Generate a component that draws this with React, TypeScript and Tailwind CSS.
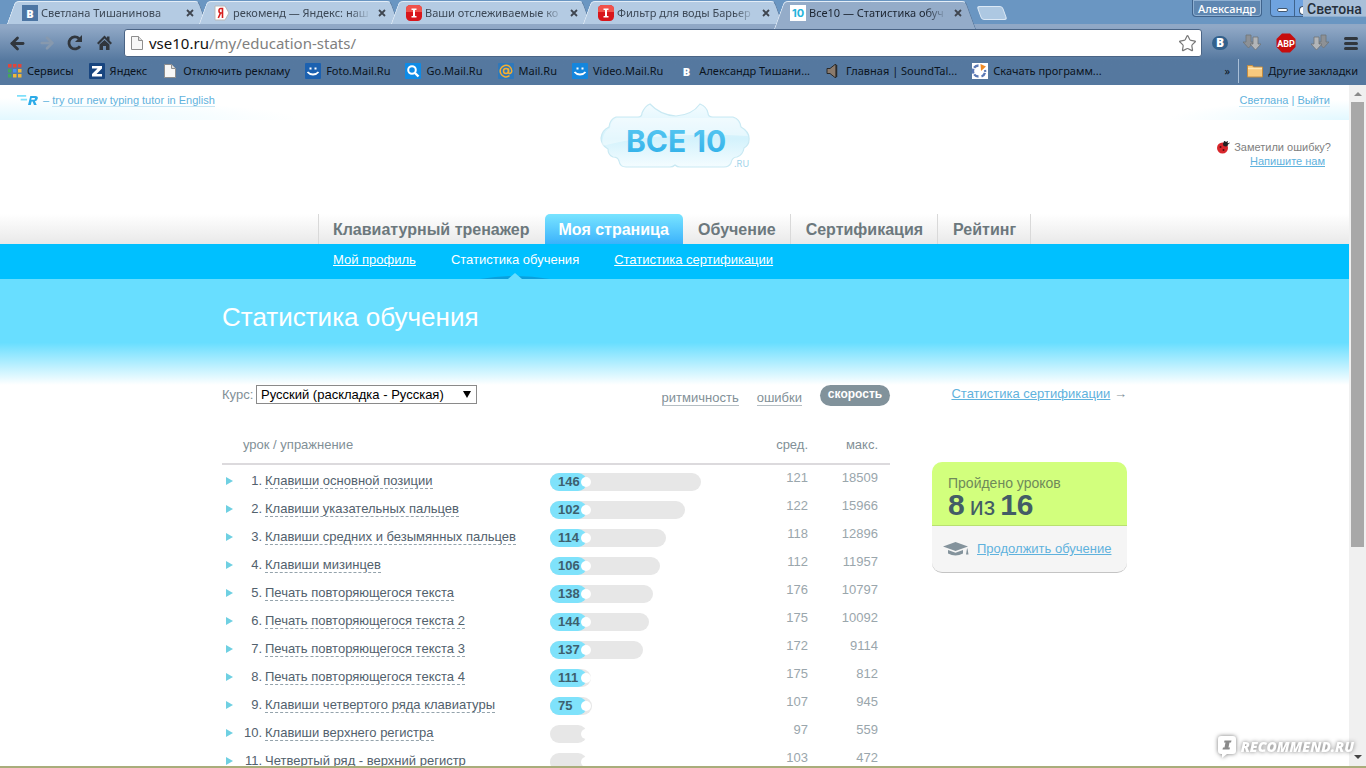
import React, { useState } from 'react';
import { ArrowLeft, ArrowRight, Star } from 'lucide-react';

interface Lesson {
  id: number;
  name: string;
  speed: number | null;
  bar: number;
  avg: number;
  max: number;
}

// bar: ширина серой полосы в пикселях
const lessons: Lesson[] = [
  { id: 1, name: 'Клавиши основной позиции', speed: 146, bar: 151, avg: 121, max: 18509 },
  { id: 2, name: 'Клавиши указательных пальцев', speed: 102, bar: 135, avg: 122, max: 15966 },
  { id: 3, name: 'Клавиши средних и безымянных пальцев', speed: 114, bar: 116, avg: 118, max: 12896 },
  { id: 4, name: 'Клавиши мизинцев', speed: 106, bar: 110, avg: 112, max: 11957 },
  { id: 5, name: 'Печать повторяющегося текста', speed: 138, bar: 103, avg: 176, max: 10797 },
  { id: 6, name: 'Печать повторяющегося текста 2', speed: 144, bar: 99, avg: 175, max: 10092 },
  { id: 7, name: 'Печать повторяющегося текста 3', speed: 137, bar: 93, avg: 172, max: 9114 },
  { id: 8, name: 'Печать повторяющегося текста 4', speed: 111, bar: 41, avg: 175, max: 812 },
  { id: 9, name: 'Клавиши четвертого ряда клавиатуры', speed: 75, bar: 42, avg: 107, max: 945 },
  { id: 10, name: 'Клавиши верхнего регистра', speed: null, bar: 37, avg: 97, max: 559 },
  { id: 11, name: 'Четвертый ряд - верхний регистр', speed: null, bar: 37, avg: 103, max: 472 },
];

const VkIcon = ({ plain = false }: { plain?: boolean }) => (
  <span className={`flex h-4 w-4 shrink-0 items-center justify-center text-[11px] font-black leading-none text-white ${plain ? '' : 'bg-[#4c75a3]'}`}>B</span>
);

const YandexIcon = () => (
  <svg viewBox="0 0 16 16" className="h-4 w-4 shrink-0">
    <path d="M1 1h10l4 7-4 7H1z" fill="#fff" stroke="#b9b9b9" />
    <path d="M8.500 13V3.500H6.700C4.400 3.500 4.400 8 6.700 8h1.800M6.500 8 4.300 13" fill="none" stroke="#d6201f" strokeWidth="1.600" />
  </svg>
);

const RecommendIcon = () => (
  <svg viewBox="0 0 16 16" className="h-4 w-4 shrink-0">
    <rect width="16" height="16" rx="4.500" fill="#d8161b" />
    <path d="M4.500 0h7Q16 0 16 4.500V7H0V4.500Q0 0 4.500 0z" fill="#f0524b" />
    <path d="M5.500 3.500h5v1.500H9v6h1.500v1.500h-5V11H7V5H5.500z" fill="#fff" />
  </svg>
);

const Vse10Icon = () => (
  <span className="flex h-4 w-4 shrink-0 items-center justify-center bg-white font-[Inter] text-[11px] font-bold leading-none text-[#22b3dc]">10</span>
);

const PageIcon = () => (
  <svg viewBox="0 0 16 16" className="h-4 w-4 shrink-0">
    <path d="M2.500 1.500h7l4 4v9h-11z" fill="#f7f7f7" stroke="#8e8e8e" />
    <path d="M9.500 1.500v4h4" fill="#ddd" stroke="#8e8e8e" />
  </svg>
);

const SmileIcon = ({ bright = false }: { bright?: boolean }) => (
  <svg viewBox="0 0 16 16" className="h-4 w-4 shrink-0">
    <rect width="16" height="16" rx="1" fill={bright ? '#1486dd' : '#1c61b0'} />
    <path d="M4.500 5.500h2M9.500 5.500h2" stroke="#fff" strokeWidth="2" />
    <path d="M2.500 9q2 2.500 5.500 2.500T13.500 9" fill="none" stroke="#fff" strokeWidth="1.800" />
  </svg>
);

const AppsIcon = () => (
  <svg viewBox="0 0 14 14" className="h-[14px] w-[14px] shrink-0">
    {['#e0463c', '#e0463c', '#e0463c', '#45a65a', '#4a8ff0', '#f0b83a', '#45a65a', '#f0b83a', '#f0b83a'].map((c, i) => (
      <rect key={i} x={(i % 3) * 5} y={Math.floor(i / 3) * 5} width="3.500" height="3.500" fill={c} />
    ))}
  </svg>
);

const ZIcon = () => (
  <svg viewBox="0 0 16 16" className="h-4 w-4 shrink-0">
    <rect width="16" height="16" rx="1" fill="#18457f" />
    <path d="M3 3h10v2.500L7.500 11H13v2.500H3V11l5.500-5.500H3z" fill="#fff" />
  </svg>
);

const GoIcon = () => (
  <svg viewBox="0 0 16 16" className="h-4 w-4 shrink-0">
    <rect width="16" height="16" rx="1" fill="#0e8be6" />
    <circle cx="7" cy="7" r="3.800" fill="none" stroke="#fff" strokeWidth="2" />
    <path d="m10 10 3.500 3.500" stroke="#fff" strokeWidth="2.400" />
  </svg>
);

const AtIcon = () => (
  <svg viewBox="0 0 16 16" className="h-4 w-4 shrink-0">
    <rect width="16" height="16" rx="1" fill="#2f78ba" />
    <circle cx="8" cy="8" r="2.500" fill="none" stroke="#f6ae30" strokeWidth="1.500" />
    <path d="M10.500 5.500v3.700c0 2 3.300 1.600 3.300-1.200A5.800 5.800 0 1 0 11.500 12.700" fill="none" stroke="#f6ae30" strokeWidth="1.500" />
  </svg>
);

const SpeakerIcon = () => (
  <svg viewBox="0 0 16 16" className="h-4 w-4 shrink-0">
    <path d="M2 5.500h3l5-4h1v13h-1l-5-4H2z" fill="#8a7a6c" stroke="#2a2a2a" />
    <path d="M11.500 2v12" stroke="#2a2a2a" strokeWidth="1.500" />
  </svg>
);

const DownloadSiteIcon = () => (
  <svg viewBox="0 0 16 16" className="h-4 w-4 shrink-0">
    <rect width="16" height="16" fill="#fff" />
    <path d="M6.500 2.500a5.500 5.500 0 0 0 0 11M9.500 13.500A5.500 5.500 0 0 0 13 7" fill="none" stroke="#5a78b4" strokeWidth="2.300" strokeDasharray="5 1" />
    <path d="M8.500 1 14 3.500 9 8z" fill="#f08a24" />
  </svg>
);

const FolderIcon = () => (
  <svg viewBox="0 0 16 16" className="h-4 w-4 shrink-0">
    <path d="M.500 2.500h5l1 1.500h9v10H.500z" fill="#f7c97e" stroke="#c08b42" />
    <path d="M1 5.500h14" stroke="#fde6b4" strokeWidth="1.500" />
  </svg>
);

const tabs = [
  { title: 'Светлана Тишанинова', icon: <VkIcon /> },
  { title: 'рекоменд — Яндекс: наш', icon: <YandexIcon /> },
  { title: 'Ваши отслеживаемые ко', icon: <RecommendIcon /> },
  { title: 'Фильтр для воды Барьер', icon: <RecommendIcon /> },
  { title: 'Все10 — Статистика обуч', icon: <Vse10Icon />, active: true },
];

const bookmarks = [
  { title: 'Сервисы', icon: <AppsIcon /> },
  { title: 'Яндекс', icon: <ZIcon /> },
  { title: 'Отключить рекламу', icon: <PageIcon /> },
  { title: 'Foto.Mail.Ru', icon: <SmileIcon /> },
  { title: 'Go.Mail.Ru', icon: <GoIcon /> },
  { title: 'Mail.Ru', icon: <AtIcon /> },
  { title: 'Video.Mail.Ru', icon: <SmileIcon bright /> },
  { title: 'Александр Тишани...', icon: <VkIcon plain /> },
  { title: 'Главная | SoundTal...', icon: <SpeakerIcon /> },
  { title: 'Скачать программ...', icon: <DownloadSiteIcon /> },
];

const TabStrip = () => (
  <div className="relative flex h-6 bg-[#6a96c2] pl-[11px]">
    {tabs.map((tab) => (
      <div key={tab.title} className={`relative w-48 shrink-0 ${tab.active ? 'z-10 h-[29px]' : 'h-6'}`}>
        {/* скошенные края вкладки */}
        <span className={`absolute top-px bottom-0 left-0 w-1/2 origin-center -skew-x-[20deg] rounded-tl-[4px] border-t border-l border-[#e3edf7] ${tab.active ? 'bg-[#94acc9]' : 'bg-[#b4cbe3]'}`} />
        <span className={`absolute top-px right-0 bottom-0 w-1/2 origin-center skew-x-[20deg] rounded-tr-[4px] border-t border-r border-t-[#e3edf7] border-r-[#5a7ba0] ${tab.active ? 'bg-[#94acc9]' : 'bg-[#b4cbe3]'}`} />
        <span className={`absolute inset-x-3 top-0.5 bottom-0 ${tab.active ? 'bg-[#94acc9]' : 'bg-[#b4cbe3]'}`} />
        <div className="relative flex h-[26px] items-center gap-[3px] pr-[5px] pl-[11px]">
          {tab.icon}
          <span className={`min-w-0 flex-1 text-[11px] whitespace-nowrap [mask-image:linear-gradient(90deg,#000_85%,transparent)] ${tab.active ? 'text-[#1b2430]' : 'text-[#3c4856]'}`}>{tab.title}</span>
          <button aria-label="Закрыть вкладку" className="flex h-4 w-4 items-center justify-center">
            <svg viewBox="0 0 8 8" className="h-2 w-2"><path d="m1 1 6 6M7 1 1 7" stroke="#3f4650" strokeWidth="1.800" /></svg>
          </button>
        </div>
      </div>
    ))}
    <button aria-label="Новая вкладка" className="mt-[6px] ml-2 h-[14px] w-[26px] skew-x-[20deg] rounded-[3px] border border-[#dbe8f5] bg-[#adc8e2]" />
    <div className="ml-auto flex items-start">
      <button className="mr-2 h-[17px] w-[70px] rounded-b border border-t-0 border-[#3f638c] bg-[#5f87b1] text-[11px] font-medium leading-[17px] text-white shadow-[inset_0_0_0_1px_#8fb0d2]">Александр</button>
      <button aria-label="Свернуть" className="flex h-[17px] w-[25px] items-center justify-center rounded-bl border border-t-0 border-[#3f638c] bg-[#6fa3e0] pt-1">
        <span className="h-1 w-[11px] rounded-sm border border-[#40566f] bg-white" />
      </button>
      <button aria-label="Развернуть" className="flex h-[17px] w-2 items-center justify-end border-b border-[#3f638c] bg-[#6fa3e0] pt-1">
        <span className="h-[9px] w-1 rounded-l-sm border border-r-0 border-[#40566f] bg-white" />
      </button>
      <div className="h-[17px] w-[63px] border-b border-[#8fb0d2] bg-[#a8bfd8] pl-1 font-[Roboto] text-[14px] font-medium leading-[19px] whitespace-nowrap text-[#26303c]">Светона</div>
    </div>
  </div>
);

const ArrowsIcon = ({ flip = false }: { flip?: boolean }) => (
  <svg viewBox="0 0 18 18" className="h-[18px] w-[18px]">
    <g transform={flip ? 'translate(18 0) scale(-1 1)' : undefined} stroke="#6f7377" strokeWidth=".800">
      <path d="M3 1h5v7h3l-5.500 6L0 8h3z" fill="#8d9196" />
      <path d="M10 3h5v7h3l-5.500 6L7 10h3z" fill="#b2b5b8" />
    </g>
  </svg>
);

const Toolbar = () => (
  <div className="flex items-center pt-[5px] pr-2 pl-2 text-[#30363d]">
    <button aria-label="Назад" className="w-[30px]"><ArrowLeft size={19} strokeWidth={3.5} /></button>
    <button aria-label="Вперёд" className="w-[28px] text-[#8799ae]"><ArrowRight size={18} strokeWidth={3.5} /></button>
    <button aria-label="Обновить" className="w-[30px]">
      <svg viewBox="0 0 18 18" className="h-[18px] w-[18px]">
        <path d="M14 12.200A6 6 0 1 1 13 4.500" fill="none" stroke="currentColor" strokeWidth="2.800" />
        <path d="M16 1v7H9z" fill="currentColor" />
      </svg>
    </button>
    <button aria-label="Домой" className="w-7">
      <svg viewBox="0 0 18 18" className="h-[18px] w-[18px]">
        <path d="M8.500 1.500 1 9l1.500 1.500 6-6 6 6L16 9l-2.500-2.500V2.500H11V4z" fill="currentColor" />
        <path d="M3.500 10.500 8.500 6l5 4.500V16h-3.500v-4h-3v4H3.500z" fill="currentColor" />
      </svg>
    </button>
    <div className="flex h-7 flex-1 items-center rounded-[3px] border border-[#4a6485] bg-white pr-1 pl-1">
      <PageIcon />
      <div className="ml-1 flex-1 text-[15px] leading-6 text-[#808080]"><span className="text-[#111]">vse10.ru</span>/my/education-stats/</div>
      <Star size={19} strokeWidth={1.5} className="text-[#777]" />
    </div>
    <div className="ml-[10px] flex items-center gap-[15px]">
      <span className="rounded-full bg-[#33618c] px-1 text-[12px] font-black leading-[14px] text-white">B</span>
      <ArrowsIcon />
      <svg viewBox="0 0 20 20" className="h-5 w-5">
        <path d="M6 .500h8L19.500 6v8L14 19.500H6L.500 14V6z" fill="#c70d0d" />
        <text x="10" y="13.500" textAnchor="middle" fontSize="9" fontWeight="700" fontFamily="Roboto, sans-serif" fill="#fff">ABP</text>
      </svg>
      <ArrowsIcon flip />
      <button aria-label="Меню" className="flex w-[14px] flex-col gap-0.5">
        <span className="h-[3px] rounded-full bg-[#30363d]" />
        <span className="h-[3px] rounded-full bg-[#30363d]" />
        <span className="h-[3px] rounded-full bg-[#30363d]" />
      </button>
    </div>
  </div>
);

const BookmarkBar = () => (
  <div className="flex h-7 items-center pr-2 pl-2 text-[11px] text-[#0b1420]">
    <div className="flex gap-[15px]">
      {bookmarks.map((b) => (
        <a key={b.title} href="#" className="flex items-center gap-[5px] whitespace-nowrap">{b.icon}{b.title}</a>
      ))}
    </div>
    <span className="ml-auto">»</span>
    <span className="mx-2 h-6 w-px bg-[#a9bfd7]" />
    <a href="#" className="flex items-center gap-[5px] whitespace-nowrap"><FolderIcon />Другие закладки</a>
  </div>
);

const Logo = () => (
  <svg viewBox="0 0 150 68" className="h-[68px] w-[150px]">
    <defs>
      <linearGradient id="cloud" x1="0" y1="0" x2="0" y2="1">
        <stop offset="0" stopColor="#f4fcff" />
        <stop offset=".550" stopColor="#d3f2fc" />
        <stop offset="1" stopColor="#f4fcff" />
      </linearGradient>
      <linearGradient id="letters" x1="0" y1="0" x2="0" y2="1">
        <stop offset="0" stopColor="#5cc9f2" />
        <stop offset="1" stopColor="#2caee8" />
      </linearGradient>
    </defs>
    <path
      d="M16 14H38Q42 14 42 10Q45 3 50 1Q60 12 76 13Q92 12 100 1Q107 4 108 10Q108 14 113 14H133Q140 16 141 24Q150 29 149 37Q149 42 144 45Q143 52 137 54Q132 54 131 60Q129 64 124 64H80Q77 64 75 62Q73 64 70 64H26Q20 64 19 58Q18 54 13 54Q8 52 8 46Q1 42 1 35Q2 27 9 24Q10 16 16 14Z"
      fill="url(#cloud)" stroke="#c9e9f3" strokeWidth="1.200"
    />
    <path d="M2 43Q60 28 148 33Q145 27 140 24Q139 17 133 15H17Q11 17 10 25Q2 29 2 43Z" fill="#fff" opacity=".400" />
    <text x="26" y="49" fontFamily="Inter, sans-serif" fontWeight="700" fontSize="30" fill="url(#letters)">ВСЕ</text>
    <text x="93" y="49" fontFamily="Inter, sans-serif" fontWeight="700" fontSize="30" fill="url(#letters)">10</text>
    <text x="134" y="64" fontFamily="Inter, sans-serif" fontSize="9" fill="#9fd4ea">.RU</text>
  </svg>
);

const SiteHeader = () => (
  <header className="flex h-[129px] items-start justify-between">
    <div className="flex h-[35px] w-[600px] items-start gap-[3px] bg-[radial-gradient(ellipse_300px_22px_at_0_100%,#e2f8ff,transparent)] pt-[7px] pl-4 text-[11px] leading-4 text-[#5fb2dd]">
      <svg viewBox="0 0 24 12" className="mt-[3px] h-[11px] w-6">
        <path d="M0 1h10M4 5h7" stroke="#7fe0fa" strokeWidth="2" />
        <path d="M14.500 1H20q3.500 0 2.600 3-.600 2.200-3 2.800L21.500 11h-3l-1.500-3.800H16L15 11h-3zM16 3.200l-.500 2H18q1.600 0 1.800-1 .200-1-1.200-1z" fill="#2cabe8" />
      </svg>
      <span>– <a href="#" className="border-b border-[#c5e5f3]">try our new typing tutor in English</a></span>
    </div>
    <div className="pt-[18px]"><Logo /></div>
    <div className="w-[600px] text-right text-[11px] leading-[14px] text-[#808080]">
      <div className="h-[35px] bg-[radial-gradient(ellipse_180px_20px_at_100%_100%,#e2f8ff,transparent)] pt-[7px] pr-[19px] leading-4 text-[#5fb2dd]">
        <a href="#" className="border-b border-[#c5e5f3]">Светлана</a> | <a href="#" className="border-b border-[#c5e5f3]">Выйти</a>
      </div>
      <div className="mt-5 flex items-center justify-end gap-1 pr-[18px]">
        <svg viewBox="0 0 14 14" className="h-[14px] w-[14px]">
          <ellipse cx="6.500" cy="8" rx="5.500" ry="5.500" fill="#d8272c" />
          <path d="M8 1l1.500 2L12 1.500M12 4l1.500-1" stroke="#222" fill="none" />
          <circle cx="9.500" cy="4" r="2.500" fill="#222" />
          <circle cx="4.500" cy="7" r="1" fill="#5a0d10" />
          <circle cx="7.500" cy="10" r="1" fill="#5a0d10" />
        </svg>
        Заметили ошибку?
      </div>
      <a href="#" className="mr-6 text-[#5fb2dd] underline">Напишите нам</a>
    </div>
  </header>
);

const MainNav = () => (
  <nav>
    <div className="flex h-[30px] justify-center gap-px bg-gradient-to-b from-white to-[#e9e9e9] text-[16px] font-bold leading-[31px] text-[#6c787d]">
      <a href="#" className="border-l border-[#d9d9d9] px-[14px]">Клавиатурный тренажер</a>
      <a href="#" className="rounded-t-[5px] bg-gradient-to-b from-[#78e4ff] to-[#3ab2fb] px-[14px] text-white">Моя страница</a>
      <a href="#" className="border-r border-[#d9d9d9] px-[14px]">Обучение</a>
      <a href="#" className="border-r border-[#d9d9d9] px-[14px]">Сертификация</a>
      <a href="#" className="border-r border-[#d9d9d9] px-[14px]">Рейтинг</a>
    </div>
    <div className="bg-[#00c0ff] text-[13px] leading-[31px] text-white">
      <div className="mx-auto flex h-[35px] max-w-[683px] gap-[35px]">
        <a href="#" className="underline">Мой профиль</a>
        <span className="relative">
          Статистика обучения
          <svg viewBox="0 0 80 6" className="absolute bottom-0 left-1/2 h-[6px] w-20 -translate-x-1/2">
            <path d="M5 6Q40 0 75 6z" fill="#0a9fdc" />
            <path d="m33 6 7-6 7 6z" fill="#68deff" />
          </svg>
        </span>
        <a href="#" className="underline">Статистика сертификации</a>
      </div>
    </div>
  </nav>
);

const SpeedBar = ({ lesson }: { lesson: Lesson }) => (
  <div className="relative h-[18px] rounded-full bg-[#e7e7e7]" style={{ width: lesson.bar }}>
    {lesson.speed !== null && (
      <span className="block h-[18px] w-[37px] rounded-full bg-[#7fe2fb] pl-2 text-[13px] font-bold leading-[18px] text-[#3d606e]">{lesson.speed}</span>
    )}
    <span className="absolute top-1 left-[31px] h-[10px] w-[10px] rounded-full bg-white" />
  </div>
);

const LessonTable = () => (
  <table className="mt-[31px] w-full table-fixed border-separate border-spacing-0 text-[13px] text-[#52616d]">
    <thead>
      <tr className="h-7 align-top leading-4 text-[#829097]">
        <th className="w-[328px] border-b-2 border-[#dcdadd] pl-[21px] text-left font-normal">урок / упражнение</th>
        <th aria-label="скорость" className="border-b-2 border-[#dcdadd]" />
        <th className="w-[60px] border-b-2 border-[#dcdadd] text-right font-normal">сред.</th>
        <th className="w-[82px] border-b-2 border-[#dcdadd] pr-3 text-right font-normal">макс.</th>
      </tr>
    </thead>
    <tbody>
      {lessons.map((lesson) => (
        <tr key={lesson.id} className="h-7 align-top">
          <td className="pt-2">
            <div className="flex items-start leading-[15px]">
              <button aria-label="Показать упражнения" className="flex w-[18px] pt-1 pl-1">
                <svg viewBox="0 0 7 8" className="h-2 w-[7px]"><path d="M0 0v8l7-4z" fill="#6fd0e2" /></svg>
              </button>
              <span className="w-[22px] text-right">{lesson.id}.</span>
              <a href="#" className="ml-[3px] border-b border-dashed border-[#94a3ac] whitespace-nowrap">{lesson.name}</a>
            </div>
          </td>
          <td className="pt-2"><SpeedBar lesson={lesson} /></td>
          <td className="pt-[5px] text-right leading-4 text-[#9aa6ac]">{lesson.avg}</td>
          <td className="pt-[5px] pr-3 text-right leading-4 text-[#9aa6ac]">{lesson.max}</td>
        </tr>
      ))}
    </tbody>
  </table>
);

const Sidebar = () => (
  <aside className="w-[195px]">
    <div className="text-right text-[13px] leading-[18px] whitespace-nowrap text-[#829097]">
      <a href="#" className="text-[#5fb2dd] underline">Статистика сертификации</a> →
    </div>
    <div className="mt-[59px] overflow-hidden rounded-[10px] border-b border-[#c4c4c4] bg-[#f5f5f5]">
      <div className="border-b border-[#b9e070] bg-[#d2ff7d] px-4 pt-[13px] pb-[5px] text-[#6f8a5a]">
        <div className="text-[14px] leading-4">Пройдено уроков</div>
        <div className="flex items-baseline gap-[5px] text-[25px] leading-7 text-[#435c66]">
          <b className="text-[30px]">8</b>из<b className="text-[30px]">16</b>
        </div>
      </div>
      <div className="flex h-[46px] items-center gap-2 pl-[11px] text-[13px]">
        <svg viewBox="0 0 26 14" className="h-[14px] w-[26px]" fill="#84939c">
          <path d="M0 4.500 12.500 0 25 4.500 12.500 9z" />
          <path d="M5 8v3.500q7.500 4 15 0V8l-7.500 2.700z" />
          <path d="M24 6.500h.500l1 6h-2.500z" />
        </svg>
        <a href="#" className="text-[#5fb2dd] underline">Продолжить обучение</a>
      </div>
    </div>
  </aside>
);

const Stats = () => {
  const [course, setCourse] = useState('ru');

  return (
    <main>
      <div className="h-[106px] bg-[linear-gradient(#68deff_60%,#fff)]">
        <h1 className="mx-auto max-w-[905px] pt-[22px] text-[26px] leading-8 text-white">Статистика обучения</h1>
      </div>
      <div className="mx-auto flex max-w-[905px] justify-between">
        <section className="w-[668px]">
          <div className="flex items-start text-[13px] text-[#829097]">
            <label htmlFor="course" className="mr-1 w-[30px] leading-[19px]">Курс:</label>
            <div className="relative">
              <select
                id="course"
                value={course}
                onChange={(e) => setCourse(e.target.value)}
                className="block h-[19px] w-[221px] appearance-none border border-[#8a8a8a] bg-white pl-1 text-[13px] leading-4 text-black"
              >
                <option value="ru">Русский (раскладка - Русская)</option>
                <option value="en">Английский</option>
              </select>
              <svg viewBox="0 0 8 7" className="pointer-events-none absolute top-[6px] right-[6px] h-[7px] w-2"><path d="M0 0h8L4 7z" /></svg>
            </div>
            <div className="ml-auto flex items-start gap-[18px] leading-[15px]">
              <a href="#" className="mt-[5px] border-b border-[#b5bec3]">ритмичность</a>
              <a href="#" className="mt-[5px] border-b border-[#b5bec3]">ошибки</a>
              <button className="h-[21px] w-[70px] rounded-full bg-[#81929b] pb-[3px] text-[12px] font-bold leading-4 text-white">скорость</button>
            </div>
          </div>
          <LessonTable />
        </section>
        <Sidebar />
      </div>
    </main>
  );
};

const ScrollBar = () => (
  <div className="flex w-[17px] shrink-0 flex-col items-center justify-between bg-[#f0f0f0] pt-[7px] pb-[7px]">
    <svg viewBox="0 0 8 4" className="h-1 w-2"><path d="m0 4 4-4 4 4z" fill="#8a8a8a" /></svg>
    <div className="mt-[6px] h-2/3 w-[13px] bg-[#a8a8a8]" />
    <svg viewBox="0 0 8 4" className="mt-auto h-1 w-2"><path d="m0 0 4 4 4-4z" fill="#444" /></svg>
  </div>
);

const Watermark = () => (
  <div className="absolute right-3 bottom-2 flex items-center gap-1 font-['Open_Sans'] [filter:drop-shadow(0_0_2px_#777)]">
    <svg viewBox="0 0 20 23" className="h-[23px] w-5">
      <path d="M4 1h12q3 0 3 3v12q0 3-3 3h-6l-5 4v-4H4q-3 0-3-3V4q0-3 3-3z" fill="#fff" />
      <path d="M7.500 5.500h7l-.500 2h-1.500l-1 5H13l-.500 2h-7l.500-2h1.500l1-5H7z" fill="#8a8a8a" />
    </svg>
    <span className="text-[14px] font-extrabold italic leading-5 text-white">RECOMMEND.RU</span>
  </div>
);

const App: React.FC = () => (
  <div className="flex h-screen flex-col overflow-hidden bg-white font-['Liberation_Sans',Arial,sans-serif]">
    <div className="h-[85px] shrink-0 border-b border-[#9c9ba3] bg-[#6a96c2] font-['Noto_Sans',sans-serif]">
      <TabStrip />
      <div className="bg-gradient-to-b from-[#90a8c6] from-5% to-[#55789f] to-60%">
        <Toolbar />
        <BookmarkBar />
      </div>
    </div>
    <div className="relative flex min-h-0 flex-1">
      <div className="min-w-0 flex-1 overflow-hidden">
        <SiteHeader />
        <MainNav />
        <Stats />
      </div>
      <ScrollBar />
      <Watermark />
    </div>
    <div className="h-0.5 shrink-0 bg-[#a9ad7b]" />
  </div>
);

export default App;
